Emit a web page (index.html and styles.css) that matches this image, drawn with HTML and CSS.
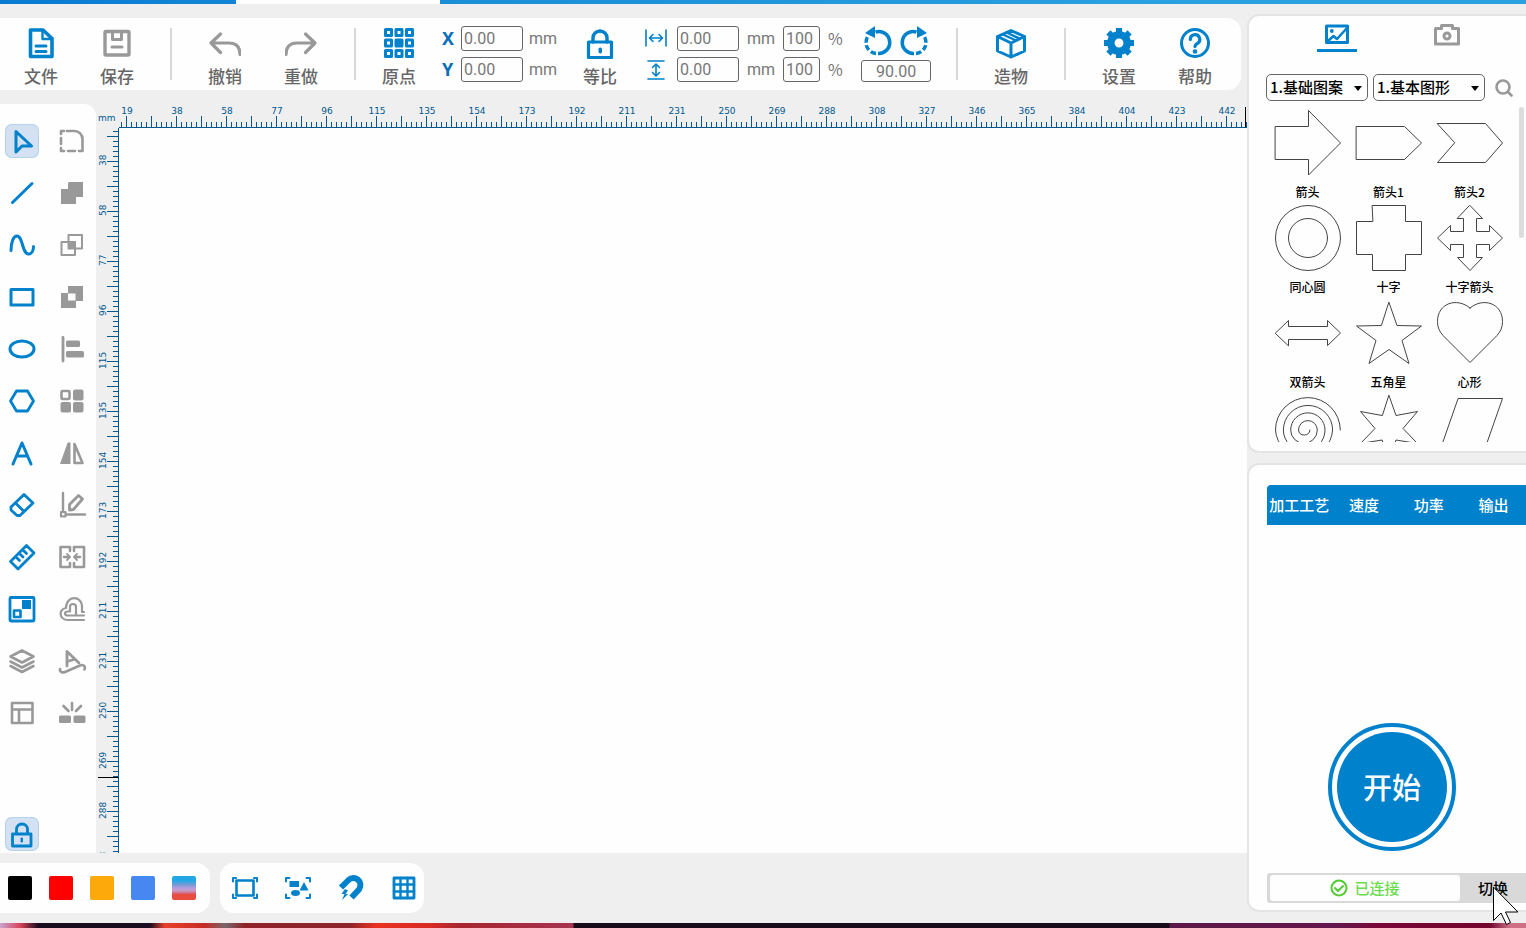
FILE: index.html
```html
<!doctype html>
<html lang="zh-CN">
<head>
    <meta charset="UTF-8">
    <title>激光雕刻</title>
    <meta name="viewport" content="width=device-width, initial-scale=1.0"/>
    <link rel="stylesheet" href="styles.css">
</head>
<body>
    <div class="topstrip"><span class="topstrip-tab"></span></div>

    <div class="app">
        <main class="main">
            <!-- 顶部工具栏 -->
            <div class="toolbar">
                <button class="tool">
                    <svg class="blue" viewBox="0 0 32 32"><path d="M5.500 3h12.500L27 11.500V29.500H5.500z" stroke-width="3.600"/><path d="M17.500 3v9h8.500" stroke-width="2.400"/><path d="M11 19h10M11 24.500h10" stroke-width="3"/></svg>
                    文件
                </button>
                <button class="tool">
                    <svg viewBox="0 0 32 32"><rect x="4" y="4.500" width="24" height="23.500" rx="1" stroke-width="3.400"/><path d="M11.500 5v7.500h9V5M11 20h10" stroke-width="3"/></svg>
                    保存
                </button>
                <i class="sep"></i>
                <button class="tool">
                    <svg viewBox="0 0 32 32"><path d="M11.500 7L2 16l9.500 9.500M3 16h17c7 0 11 4 11 11.500" stroke-width="3.200"/></svg>
                    撤销
                </button>
                <button class="tool">
                    <svg viewBox="0 0 32 32"><path d="M20.500 7L30 16l-9.500 9.500M29 16H12C5 16 1 20 1 27.500" stroke-width="3.200"/></svg>
                    重做
                </button>
                <i class="sep"></i>
                <button class="tool tool-origin">
                    <svg class="blue" viewBox="0 0 32 32"><g stroke-width="3"><rect x="2.500" y="2.500" width="6" height="6"/><rect x="13" y="2.500" width="6" height="6"/><rect x="23.500" y="2.500" width="6" height="6"/><rect x="2.500" y="13" width="6" height="6"/><rect x="13" y="13" width="6" height="6" class="fill"/><rect x="23.500" y="13" width="6" height="6"/><rect x="2.500" y="23.500" width="6" height="6"/><rect x="13" y="23.500" width="6" height="6"/><rect x="23.500" y="23.500" width="6" height="6"/></g></svg>
                    原点
                </button>
                <div class="fields">
                    <div class="field"><label for="px">X</label><input id="px" value="0.00"><span>mm</span></div>
                    <div class="field"><label for="py">Y</label><input id="py" value="0.00"><span>mm</span></div>
                </div>
                <button class="tool tool-lock">
                    <svg class="blue" viewBox="0 0 32 32"><rect x="4.500" y="15" width="23" height="15.500" stroke-width="3.200"/><path d="M9 15v-4a7 7 0 0 1 14 0v4" stroke-width="3.400"/><rect class="dot" x="14.500" y="20.500" width="3.500" height="6" rx="1.700"/></svg>
                    等比
                </button>
                <div class="fields fields-size">
                    <div class="field">
                        <label for="sw" aria-label="宽"><svg class="blue" viewBox="0 0 22 22"><path d="M1 2v16M21 2v16M4.500 10h13M8 6.500L4.500 10 8 13.500M14 6.500l3.500 3.500-3.500 3.500" stroke-width="1.600"/></svg></label>
                        <input id="sw" value="0.00"><span>mm</span><input class="pct" aria-label="宽度比例" value="100"><span class="unit">%</span>
                    </div>
                    <div class="field">
                        <label for="sh" aria-label="高"><svg class="blue" viewBox="0 0 22 22"><path d="M3 2h16M3 20h16M11 5v12M7.500 8.500L11 5l3.500 3.500M7.500 13.500L11 17l3.500-3.500" stroke-width="1.600"/></svg></label>
                        <input id="sh" value="0.00"><span>mm</span><input class="pct" aria-label="高度比例" value="100"><span class="unit">%</span>
                    </div>
                </div>
                <div class="rotate">
                    <div class="rotate-btns">
                        <button aria-label="逆时针"><svg class="blue" viewBox="0 0 32 32"><path d="M14.500 6A11 11 0 1 1 17 27.500" stroke-width="3.600" class="butt"/><path d="M17 27.500A11 11 0 0 1 8 9" stroke-width="3.400" class="butt" stroke-dasharray="5.500 2.500" stroke-dashoffset="-2"/><path class="dot" d="M4 7l10-7v12z"/></svg></button>
                        <button aria-label="顺时针"><svg class="blue" viewBox="0 0 32 32"><path d="M17.500 6A11 11 0 1 0 15 27.500" stroke-width="3.600" class="butt"/><path d="M15 27.500A11 11 0 0 0 24 9" stroke-width="3.400" class="butt" stroke-dasharray="5.500 2.500" stroke-dashoffset="-2"/><path class="dot" d="M28 7L18 0v12z"/></svg></button>
                    </div>
                    <input aria-label="旋转角度" value="90.00">
                </div>
                <i class="sep"></i>
                <button class="tool">
                    <svg class="blue" viewBox="0 0 32 32"><path d="M16 3.500l13.500 6V24L16 30 2.500 24V9.500zM2.500 9.500l13.500 6.500 13.500-6.500M16 16v14" stroke-width="3"/><path d="M8 7.500l13 6M11.500 5.500l13 6" stroke-width="2.400"/></svg>
                    造物
                </button>
                <i class="sep"></i>
                <button class="tool">
                    <svg class="blue" viewBox="0 0 32 32"><circle cx="16" cy="16" r="8.200" stroke-width="7.500"/><g stroke-width="6" class="butt"><path d="M16 1v5M16 26v5M1 16h5M26 16h5"/><path d="M5.400 5.400L9 9M23 23l3.600 3.600M26.600 5.400L23 9M9 23l-3.600 3.600"/></g></svg>
                    设置
                </button>
                <button class="tool">
                    <svg class="blue" viewBox="0 0 32 32"><circle cx="16" cy="16" r="13.500" stroke-width="3"/><path d="M11.300 12.500a4.700 4.700 0 1 1 7 4c-1.700 1-2.300 1.700-2.300 3" stroke-width="3.200"/><circle class="dot" cx="16" cy="24.500" r="2.300"/></svg>
                    帮助
                </button>
            </div>

            <div class="workspace">
                <!-- 左侧工具 -->
                <div class="side">
                    <div class="side-grid">
                        <button class="on" aria-label="选择"><svg class="blue" viewBox="0 0 34 34"><path d="M11 7.500v20.500l6-6h9.500z" stroke-width="3"/></svg></button>
                        <button aria-label="圆角"><svg viewBox="0 0 34 34"><path d="M12 7h7.500a8 8 0 0 1 8 8v12h-3.500M9 7H6v3M6 14v6M6 24v3h3M13 27h7" stroke-width="2.600"/></svg></button>
                        <button aria-label="直线"><svg class="blue" viewBox="0 0 34 34"><path d="M7.500 26.500L27 7.500" stroke-width="3"/></svg></button>
                        <button aria-label="并集"><svg viewBox="0 0 34 34"><path class="dot" d="M14 6h14v15h-7v7H6V13h7V7z"/></svg></button>
                        <button aria-label="曲线"><svg class="blue" viewBox="0 0 34 34"><path d="M6 22.500C6 14 8.500 8 12 8c6 0 5 18 11.500 18 3 0 5-3 5-7.500" stroke-width="3"/></svg></button>
                        <button aria-label="交集"><svg viewBox="0 0 34 34"><path d="M13.500 7H27v13.500H13.500zM6.500 14H20v13H6.500z" stroke-width="2"/><path class="dot" d="M13 13.500h7.500v7H13z"/></svg></button>
                        <button aria-label="矩形"><svg class="blue" viewBox="0 0 34 34"><rect x="6" y="9.500" width="22" height="15.500" stroke-width="3"/></svg></button>
                        <button aria-label="差集"><svg viewBox="0 0 34 34"><path class="dot" fill-rule="evenodd" d="M13 6h15v15h-7v7H6V13h7zM13 13.500v7h7.500v-7z"/></svg></button>
                        <button aria-label="椭圆"><svg class="blue" viewBox="0 0 34 34"><ellipse cx="17" cy="17" rx="12" ry="8" stroke-width="3"/></svg></button>
                        <button aria-label="对齐"><svg viewBox="0 0 34 34"><path d="M8 5.500v23.500" stroke-width="2.800"/><rect class="dot" x="11" y="8.500" width="14" height="6.500" rx="1.500"/><rect class="dot" x="11" y="19" width="18" height="6.500" rx="1.500"/></svg></button>
                        <button aria-label="多边形"><svg class="blue" viewBox="0 0 34 34"><path d="M11.500 7h11l6 10-6 10h-11l-6-10z" stroke-width="2.800"/></svg></button>
                        <button aria-label="阵列"><svg viewBox="0 0 34 34"><rect x="6.500" y="7" width="8" height="8" rx="1" stroke-width="2.600"/><rect class="dot" x="18" y="5.500" width="10.500" height="11" rx="2"/><rect class="dot" x="5.500" y="18" width="10.500" height="10.500" rx="2"/><rect class="dot" x="18" y="18" width="10.500" height="10.500" rx="2"/></svg></button>
                        <button aria-label="文字"><svg class="blue" viewBox="0 0 34 34"><path d="M8 28l9-21 9 21M11.500 20h11" stroke-width="3"/></svg></button>
                        <button aria-label="镜像"><svg viewBox="0 0 34 34"><path class="dot" d="M12.500 7q2-1.500 3 0v21H5z"/><path d="M19.500 8v19h8z" stroke-width="2.600"/></svg></button>
                        <button aria-label="橡皮擦"><svg class="blue" viewBox="0 0 34 34"><path d="M19 6.500l9 8.500-13 12.500h-3L6 22v-3zM10.500 15l8.500 8.500" stroke-width="2.800"/></svg></button>
                        <button aria-label="节点编辑"><svg viewBox="0 0 34 34"><path d="M8 5v18M11 26.500h19" stroke-width="2.400"/><path d="M6 24h4.500v4.500H6z" stroke-width="2.200"/><path d="M14.500 22v-5.500L23.500 7.500l4 3.500-9 10.500z" stroke-width="2.800"/></svg></button>
                        <button aria-label="测量"><svg class="blue" viewBox="0 0 34 34"><path d="M21.500 5.500l7.500 7.500-16 16-7.500-7.500zM10.500 16.500l4 4M14 13l4 4M17.500 9.500l4 4" stroke-width="2.800"/></svg></button>
                        <button aria-label="合并"><svg viewBox="0 0 34 34"><path d="M15 11V7H5.500v20H15v-4M19 11V7h10v20H19v-4M9 17h5M20 17h5" stroke-width="2.600"/><path d="M12 14l3 3-3 3M22 14l-3 3 3 3" stroke-width="1.800"/></svg></button>
                        <button aria-label="排版"><svg class="blue" viewBox="0 0 34 34"><rect x="5" y="5.500" width="24" height="23.500" rx="1" stroke-width="2.800"/><rect class="dot" x="17" y="8" width="9" height="9"/><rect x="9" y="18.500" width="6.500" height="6.500" stroke-width="2.600"/></svg></button>
                        <button aria-label="偏移"><svg viewBox="0 0 34 34"><path d="M29 28H13c-9 0-10-11-2-12 0-13 16-13 16-1v5h2" stroke-width="2.200"/><path d="M29 23.500H13c-4 0-4-4 0-4h2v-4.500c0-4 6-4 6 0v8" stroke-width="2.200"/></svg></button>
                        <button aria-label="图层"><svg viewBox="0 0 34 34"><path d="M17 6.500l11.500 6L17 18.500 5.500 12.500zM5.500 17.500L17 23.500 28.500 17.500M5.500 22L17 28l11.500-6" stroke-width="2.600"/></svg></button>
                        <button aria-label="路径文字"><svg viewBox="0 0 34 34"><path d="M12 22V7.500L24 19M12 17.500l7-2" stroke-width="2.800"/><path d="M5 25c-.5 3 2.500 4 5 3l15-6.500c3-1.500 6 1 4.500 4" stroke-width="2.600"/></svg></button>
                        <button aria-label="面板"><svg viewBox="0 0 34 34"><path d="M7 7h20.500v20H7zM7 13.500h20.500M14 14v13" stroke-width="2.600"/></svg></button>
                        <button aria-label="激光"><svg viewBox="0 0 34 34"><path d="M17 7v7M8.500 10l5 5M26 10l-5 5" stroke-width="2.600"/><rect class="dot" x="4" y="19.500" width="12" height="7.500" rx="1.500"/><rect class="dot" x="18.500" y="19.500" width="12" height="7.500" rx="1.500"/></svg></button>
                    </div>
                    <button class="on" aria-label="锁定"><svg class="blue" viewBox="0 0 34 34"><path d="M7.500 17H26v12H7.500zM11.500 17v-4.500a5.500 5.500 0 0 1 11 0V17" stroke-width="2.800"/><rect class="dot" x="15.500" y="20.500" width="2.500" height="5" rx="1.200"/></svg></button>
                </div>

                <div class="corner">mm</div>
                <div class="ruler-x"><div class="nums" id="numsX"></div><b class="mark"></b></div>
                <div class="ruler-y"><div class="nums" id="numsY"></div><b class="mark"></b></div>
                <div class="canvas"></div>
            </div>

            <div class="footbar">
                <div class="colors">
                    <button class="c-black" aria-label="黑色"></button>
                    <button class="c-red" aria-label="红色"></button>
                    <button class="c-orange" aria-label="橙色"></button>
                    <button class="c-blue" aria-label="蓝色"></button>
                    <button class="c-mix" aria-label="渐变"></button>
                </div>
                <div class="views">
                    <button aria-label="适应画布"><svg class="blue" viewBox="0 0 26 26"><path d="M4.500 5.500h17v15h-17z" stroke-width="2.600"/><path d="M1 6.500V3h3M22 3h3v3.500M25 19.500V23h-3M4 23H1v-3.500" stroke-width="2"/></svg></button>
                    <button aria-label="适应图形"><svg class="blue" viewBox="0 0 26 26"><path d="M1 6.500V3h3.500M21.500 3H25v3.500M25 19.500V23h-3.500M4.500 23H1v-3.500" stroke-width="2"/><path class="dot" d="M4.500 6h9.500v6H4.500zM19 7l4.500 8.500h-9z"/><ellipse class="dot" cx="10.500" cy="18" rx="4.500" ry="3"/></svg></button>
                    <button aria-label="吸附"><svg class="blue" viewBox="0 0 26 26"><path class="butt" d="M3 12.500l7.500-7.500c6-5.500 15.500 1.500 10.500 9.500L13.500 22.500" stroke-width="6"/><path class="dot" d="M7 14l-3.500 5h3L4 25l6-6H7.500L10 15.500z"/></svg></button>
                    <button aria-label="网格"><svg class="blue" viewBox="0 0 26 26"><rect x="3" y="3" width="20" height="20" stroke-width="2.800"/><path d="M9.500 3v20M16.500 3v20M3 9.500h20M3 16.500h20" stroke-width="2.400"/></svg></button>
                </div>
            </div>
        </main>

        <aside class="aside">
            <section class="card gallery">
                <div class="tabs">
                    <button class="tab-on" aria-label="图库"><svg class="blue" viewBox="0 0 28 24"><rect x="3.500" y="4" width="21" height="16.500" stroke-width="3"/><path d="M5 19l5.500-5 3.500 3L24 6" stroke-width="2.600"/><circle class="dot" cx="8.800" cy="9" r="1.900"/></svg></button>
                    <button aria-label="相机"><svg viewBox="0 0 28 24"><path d="M3 6.500h5.500V3.500h11v3H25.500v15.500H2.500V6.500z" stroke-width="3"/><circle cx="14" cy="14" r="3" stroke-width="3"/></svg></button>
                </div>
                <div class="filter">
                    <div class="pick"><select aria-label="分类"><option>1.基础图案</option></select></div>
                    <div class="pick pick-wide"><select aria-label="子类"><option>1.基本图形</option></select></div>
                    <button aria-label="搜索"><svg viewBox="0 0 18 18"><circle cx="8" cy="8" r="6.500" stroke-width="2.600"/><path d="M13 13l3.500 3.500" stroke-width="2.600"/></svg></button>
                </div>
                <div class="shapes-wrap">
                    <div class="shapes">
                        <figure><svg viewBox="0 0 68 68"><path d="M1.500 17.500h33V1.500L66.500 34l-32 32V50.500h-33z"/></svg><figcaption>箭头</figcaption></figure>
                        <figure><svg viewBox="0 0 68 68"><path d="M1.500 17.500h48L66.500 34l-17 16.500h-48z"/></svg><figcaption>箭头1</figcaption></figure>
                        <figure><svg viewBox="0 0 68 68"><path d="M1.500 14.500h48L66.500 34l-17 19.500h-48L18.500 34z"/></svg><figcaption>箭头2</figcaption></figure>
                        <figure><svg viewBox="0 0 68 68"><circle cx="34" cy="34" r="32.500"/><circle cx="34" cy="34" r="19.500"/></svg><figcaption>同心圆</figcaption></figure>
                        <figure><svg viewBox="0 0 68 68"><path d="M17.500 1.500h33v16h16v33h-16v16h-33v-16h-16v-33h16z"/></svg><figcaption>十字</figcaption></figure>
                        <figure><svg viewBox="0 0 68 68"><path d="M34 1.500l12.500 13h-6v13h13v-6L66.500 34l-13 12.500v-6h-13v13h6L34 66.500l-12.500-13h6v-13h-13v6L1.500 34l13-12.500v6h13v-13h-6z"/></svg><figcaption>十字箭头</figcaption></figure>
                        <figure><svg viewBox="0 0 68 68"><path d="M1.500 34l13-12.500v6h39v-6L66.500 34l-13 12.500v-6h-39v6z"/></svg><figcaption>双箭头</figcaption></figure>
                        <figure><svg viewBox="0 0 68 68"><path d="M34 3.500l8 23 24.500.5L47 41.500l7 23L34 50.500l-20 14 7-23L1.500 27l24.500-.5z"/></svg><figcaption>五角星</figcaption></figure>
                        <figure><svg viewBox="0 0 68 68"><path d="M34 9C21-2 1.500 4 1.500 22.500c0 6 2 10 5.500 14L34 63.500l27-27c3.500-4 5.500-8 5.500-14C66.500 4 47 -2 34 9z"/></svg><figcaption>心形</figcaption></figure>
                        <figure><svg viewBox="0 0 68 68"><path d="M36 36A5.800 5.800 0 0 1 24.500 36A9.400 9.400 0 0 1 43.300 36A13.300 13.300 0 0 1 16.700 36A17.100 17.100 0 0 1 51 36A20.800 20.800 0 0 1 9.400 36A24.600 24.600 0 0 1 58.600 36A28.600 28.600 0 0 1 1.500 36A32.400 32.400 0 0 1 66.300 36"/></svg><figcaption>螺旋</figcaption></figure>
                        <figure><svg viewBox="0 0 68 68"><path d="M34 1.500l7 20 21.500-4L48 34.500l14.500 15-21.500-3.500-7 20-7-20-21.500 3.500 14.500-15L5.500 17.500 27 21.500z"/></svg><figcaption>六角星</figcaption></figure>
                        <figure><svg viewBox="0 0 68 68"><path d="M22.500 4.500h44l-21 60h-44z"/></svg><figcaption>平行四边形</figcaption></figure>
                    </div>
                    <i class="thumb"></i>
                </div>
            </section>

            <section class="card work">
                <table class="params">
                    <thead><tr><th>加工工艺</th><th>速度</th><th>功率</th><th>输出</th></tr></thead>
                </table>
                <button class="start"><span>开始</span></button>
                <div class="status">
                    <div class="state"><svg viewBox="0 0 18 18"><circle cx="9" cy="9" r="7.500"/><path d="M5 9l3 3 5-5"/></svg>已连接</div>
                    <button>切换</button>
                </div>
                <svg class="pointer" viewBox="0 0 26 38"><path d="M.5.5v33L8 26l5.500 11.500 4-2L12.500 25H24.500z"/></svg>
            </section>
        </aside>
    </div>

    <div class="desktop"></div>

    <script>
    (function(){
        // 每50像素一个刻度值
        var STEP = 19.22;

        function fill(id, from, count){
            var box = document.getElementById(id);
            for (var i = from; i < from + count; i++) {
                var el = document.createElement('span');
                el.innerHTML = Math.round(STEP * i);
                box.appendChild(el);
            }
        }

        fill('numsX', 1, Math.ceil(document.querySelector('.ruler-x').offsetWidth / 50));
        fill('numsY', 2, Math.ceil(document.querySelector('.ruler-y').offsetHeight / 50));
    })();
    </script>
</body>
</html>
```
FILE: styles.css
```css
* { margin: 0; padding: 0; box-sizing: border-box; }
html, body { height: 100%; }
body { display: flex; flex-direction: column; overflow: hidden; background: #efefef; font-family: "Noto Sans CJK SC", sans-serif; }
button { border: 0; background: none; font-family: inherit; color: inherit; }
svg { display: block; fill: none; stroke: #999; stroke-linecap: round; stroke-linejoin: round; }
svg.blue { stroke: #0081cc; }
svg .dot { fill: #999; stroke: none; }
svg.blue .dot { fill: #0081cc; }
svg .fill { fill: #0081cc; }
svg .butt { stroke-linecap: butt; }

.topstrip { flex: none; height: 4px; padding-left: 236px; background: linear-gradient(90deg, #0a7ad2, #1c8ed8 30%, #2aa2e0 80%); }
.topstrip-tab { display: block; width: 204px; height: 4px; background: #fefefe; }
.app { flex: 1; min-height: 0; display: flex; }
.main { flex: 1; min-width: 0; display: flex; flex-direction: column; padding-top: 14px; }
.aside { flex: none; width: 279px; padding: 10px 0 11px; display: flex; flex-direction: column; gap: 10px; }
.desktop { flex: none; height: 5px; background: linear-gradient(90deg, #c9a5d0 0, #d9435a 20px, #1b0d20 38px, #1b0d20 150px, #e8402b 165px, #c52a26 205px, #77666a 225px, #8f2228 245px, #8e242c 350px, #e8321f 375px, #d92b24 430px, #a72530 460px, #a63450 573px, #170c19 574px, #170c19 1169px, #5c1748 1170px, #64174c 1340px, #7b0737 1380px, #73052f 1490px, #cf7086 1510px); }

/* 工具栏 */
.toolbar { flex: none; display: flex; height: 72px; margin-right: 6px; padding: 0 8px 0 3px; background: #fefefe; border-radius: 0 14px 14px 0; }
.tool { width: 76px; padding-top: 9px; font-size: 17px; font-weight: 500; line-height: 24px; color: #666; display: flex; flex-direction: column; align-items: center; gap: 5px; }
.tool svg { width: 32px; height: 32px; }
.tool-origin { width: 56px; }
.tool-lock { width: 86px; }
.sep { width: 2px; height: 52px; margin: 10px 15px 0; background: #d9d9d9; }
.fields { display: flex; flex-direction: column; justify-content: flex-end; gap: 6px; padding: 0 0 8px 15px; }
.fields-size { padding-left: 2px; }
.field { display: flex; align-items: center; gap: 6px; color: #777; font: 16px/25px Roboto, sans-serif; }
.field label { width: 13px; font: bold 18px/25px "Noto Sans", sans-serif; color: #0a6fb8; }
.fields-size .field { gap: 8px; }
.fields-size label { width: 24px; }
.fields-size svg { width: 22px; height: 22px; }
.field .unit { width: 16px; font-family: "Noto Sans CJK SC", sans-serif; }
input { border: 1px solid #666; border-radius: 3px; background: #fefefe; color: #777; font: 16px Roboto, sans-serif; outline: 0; }
.field input { width: 62px; height: 25px; padding-left: 2px; }
.field .pct { width: 37px; }
.rotate { width: 70px; margin-left: 17px; padding-top: 8px; }
.rotate + .sep { margin-left: 25px; }
.rotate-btns { display: flex; justify-content: space-between; }
.rotate-btns svg { width: 32px; height: 32px; }
.rotate input { display: block; width: 70px; height: 22px; margin-top: 2px; text-align: center; }

/* 工作区 */
.workspace { flex: 1; min-height: 0; margin-top: 14px; display: grid; grid-template-columns: 96px 23px 1fr; grid-template-rows: 24px 1fr; }
.side { grid-row: 1 / 3; min-height: 0; display: flex; flex-direction: column; justify-content: space-between; padding: 20px 0 2px 5px; background: #fefefe; border-radius: 0 12px 0 0; }
.side-grid { display: grid; grid-template-columns: 34px 34px; gap: 18px 16px; }
.side button { width: 34px; height: 34px; border-radius: 7px; }
.side svg { width: 34px; height: 34px; }
.side .on { background: #d3e1f3; box-shadow: inset 0 0 0 1px #b3d3ec; }
.corner, .ruler-x, .ruler-y { color: #00588f; font-family: "DejaVu Sans", sans-serif; font-size: 9px; }
.corner { padding-left: 2px; line-height: 28px; }
.ruler-x, .ruler-y { position: relative; overflow: hidden; line-height: 14px; }
.ruler-x { border-bottom: 1px solid #00588f;
    background: linear-gradient(90deg, #00588f 1px, transparent 1px) 2px 100% / 5px 5px repeat-x,
                linear-gradient(90deg, #00588f 1px, transparent 1px) 7px 100% / 25px 11px repeat-x; }
.ruler-y { border-right: 1px solid #00588f;
    background: linear-gradient(#00588f 1px, transparent 1px) 100% 3px / 5px 5px repeat-y,
                linear-gradient(#00588f 1px, transparent 1px) 100% 8px / 11px 25px repeat-y; }
.ruler-x .nums { display: flex; margin-left: -17px; }
.ruler-x span { flex: none; width: 50px; text-align: center; }
.ruler-y .nums { width: 14px; padding-top: 7px; }
.ruler-y span { display: block; width: 14px; height: 50px; text-align: center; writing-mode: vertical-rl; transform: rotate(180deg); }
.mark { position: absolute; background: #000; }
.ruler-x .mark { right: 1px; top: 3px; width: 1px; height: 20px; }
.ruler-y .mark { left: 2px; bottom: 75px; width: 20px; height: 1px; }
.canvas { background: #fefefe; }

/* 底部 */
.footbar { flex: none; height: 70px; padding: 10px 0; display: flex; gap: 10px; }
.colors, .views { display: flex; align-items: center; background: #fefefe; }
.colors { gap: 17px; padding: 0 14px 0 8px; border-radius: 0 14px 14px 0; }
.colors button { width: 24px; height: 24px; border-radius: 2px; }
.c-black { background: #000; }
.c-red { background: #fe0000; }
.c-orange { background: #fea90b; }
.c-blue { background: #4787f2; }
.c-mix { background: linear-gradient(#22a7e4 20%, #6f9bd4 35%, #b39be0 50%, #c99cc8 60%, #d06a80 72%, #e84c41 76%); }
.views { gap: 27px; padding: 0 7px 0 12px; border-radius: 14px; }
.views svg { width: 26px; height: 26px; }

/* 右侧 */
.card { position: relative; background: #fefefe; border: 2px solid #e4e4e4; border-right: 0; border-radius: 12px 0 0 12px; }
.gallery { flex: none; height: 439px; }
.tabs { display: flex; padding: 6px 0 0 33px; }
.tabs button { width: 110px; height: 30px; display: flex; flex-direction: column; align-items: center; }
.tabs svg { width: 28px; height: 24px; }
.tab-on::after { content: ""; width: 40px; height: 3px; margin-top: 3px; background: #0081cc; }
.filter { display: flex; align-items: center; gap: 5px; margin-top: 22px; padding-left: 17px; }
.pick { position: relative; width: 102px; }
.pick-wide { width: 112px; }
.pick::after { content: ""; position: absolute; right: 6px; top: 12px; border: 4px solid transparent; border-top: 5px solid #000; border-bottom: 0; pointer-events: none; }
.pick select { display: block; width: 100%; height: 27px; padding: 0 0 2px 3px; appearance: none; border: 1px solid #666; border-radius: 5px; background: #fefefe; font: 500 15px "Noto Sans CJK SC", sans-serif; color: #000; }
.filter button { margin-left: 5px; }
.filter svg { width: 18px; height: 18px; }
.shapes-wrap { position: relative; height: 341px; overflow: hidden; }
.shapes { display: grid; grid-template-columns: repeat(3, 81px); padding: 8px 0 0 18px; }
.shapes figure { height: 95px; display: flex; flex-direction: column; align-items: center; gap: 6px; }
.shapes svg { width: 68px; height: 68px; stroke: #444; stroke-width: 1; stroke-linejoin: miter; }
.shapes figcaption { font-size: 12px; line-height: 18px; font-weight: 500; color: #000; white-space: nowrap; }
.thumb { position: absolute; right: 2px; top: 6px; width: 5px; height: 131px; border-radius: 3px; background: #dcdcdc; }

.work { flex: 1; display: flex; flex-direction: column; padding: 20px 0 7px 18px; }
.params { width: 100%; table-layout: fixed; border-collapse: collapse; background: #0081cc; border-radius: 4px 0 0 0; }
.params th { height: 40px; padding-bottom: 2px; font-size: 15px; font-weight: 500; color: #fff; white-space: nowrap; }
.start { width: 128px; height: 128px; margin: auto auto 22px 61px; padding: 5px; border: 4px solid #0081cc; border-radius: 50%; }
.start span { display: block; height: 110px; border-radius: 50%; background: #0081cc; color: #fff; font-size: 29px; font-weight: 500; line-height: 108px; }
.status { display: flex; height: 30px; padding: 2px 0 2px 3px; background: #d9d9d9; border-radius: 3px 0 0 3px; font-size: 15px; line-height: 24px; font-weight: 500; }
.state { flex: 1; display: flex; align-items: center; justify-content: center; gap: 6px; background: #fefefe; border-radius: 3px; color: #6bdc4f; }
.state svg { width: 18px; height: 18px; stroke: #52cc33; stroke-width: 2; }
.status button { width: 66px; padding-bottom: 2px; font-size: 15px; font-weight: 500; color: #000; }
.pointer { position: absolute; right: 7px; bottom: -15px; width: 26px; height: 38px; z-index: 2; fill: #fff; stroke: #000; stroke-width: 1; stroke-linejoin: miter; }
```
